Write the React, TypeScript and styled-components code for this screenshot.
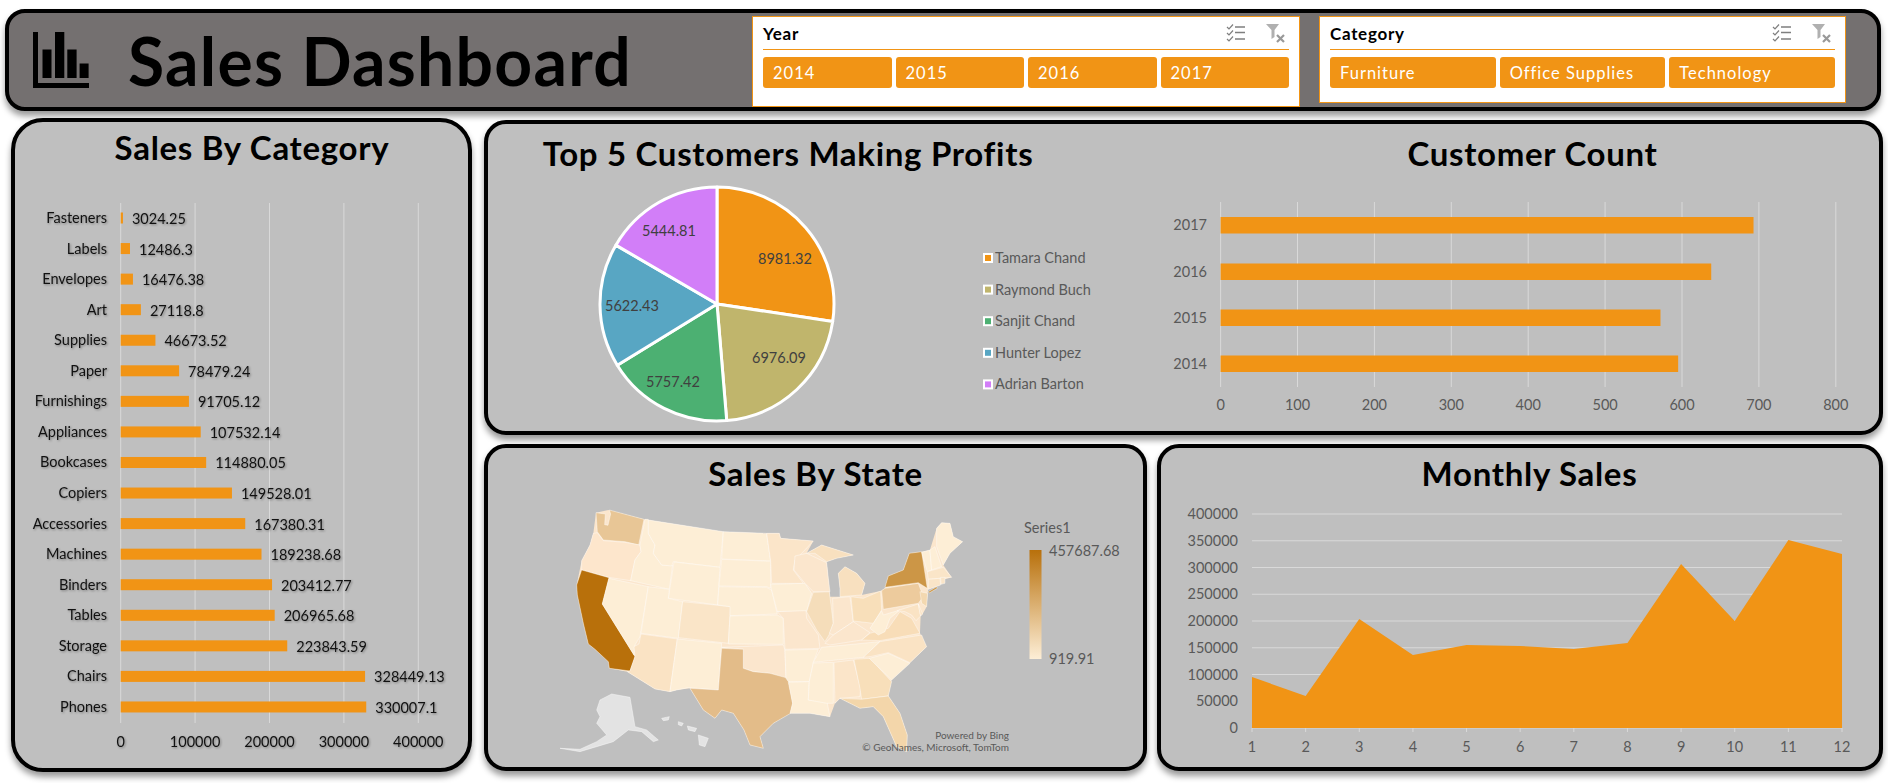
import React from 'react';
import styled, { createGlobalStyle } from 'styled-components';

const ORANGE = '#f19415';
const FONT = 'Lato, "Open Sans", sans-serif';

const categorySales: [string, number][] = [
  ['Fasteners', 3024.25],
  ['Labels', 12486.3],
  ['Envelopes', 16476.38],
  ['Art', 27118.8],
  ['Supplies', 46673.52],
  ['Paper', 78479.24],
  ['Furnishings', 91705.12],
  ['Appliances', 107532.14],
  ['Bookcases', 114880.05],
  ['Copiers', 149528.01],
  ['Accessories', 167380.31],
  ['Machines', 189238.68],
  ['Binders', 203412.77],
  ['Tables', 206965.68],
  ['Storage', 223843.59],
  ['Chairs', 328449.13],
  ['Phones', 330007.1],
];

const customers: { name: string; value: number; color: string; lx: number; ly: number }[] = [
  { name: 'Tamara Chand', value: 8981.32, color: '#f19415', lx: 785, ly: 259 },
  { name: 'Raymond Buch', value: 6976.09, color: '#c0b56c', lx: 779, ly: 358 },
  { name: 'Sanjit Chand', value: 5757.42, color: '#4cb072', lx: 673, ly: 382 },
  { name: 'Hunter Lopez', value: 5622.43, color: '#58a6c3', lx: 632, ly: 306 },
  { name: 'Adrian Barton', value: 5444.81, color: '#d27ef8', lx: 669, ly: 231 },
];

const customerCount: [string, number, number][] = [
  ['2017', 693, 225],
  ['2016', 638, 271.5],
  ['2015', 572, 317.5],
  ['2014', 595, 363.5],
];

const monthlyY = [678, 697, 620, 656, 646, 647, 650, 644, 565, 622, 541, 555];

const LIGHT = '#fdeed6';

// silhouette under the states, so small gaps between them stay filled
const mainland =
  '168,68 205,60 312,88 550,125 680,130 718,130 722,145 820,153 800,190 845,165 940,195 890,205 860,215 865,265 870,320 900,320 900,295 895,250 915,230 950,250 975,280 965,315 1022,303 1035,295 1045,258 1090,240 1108,190 1145,185 1170,180 1190,115 1205,98 1230,100 1240,140 1268,155 1230,190 1210,225 1235,262 1215,268 1200,285 1165,298 1163,310 1160,350 1148,372 1142,378 1140,430 1160,470 1110,518 1055,570 1045,618 1080,670 1102,735 1100,785 1070,770 1030,680 1000,650 960,655 900,625 885,640 870,680 810,670 750,670 700,700 660,740 670,775 630,765 612,720 580,670 545,660 525,685 490,660 450,595 410,600 390,605 345,597 262,545 208,535 205,515 165,478 145,462 130,400 112,315 110,285 125,212 150,165 160,130';

const westStates: [string, string][] = [
  ['#e8c696', '168,68 196,72 194,104 204,106 212,72 208,60 312,88 296,165 255,155 190,150 172,125'],
  ['#fde6cc', '160,130 172,128 190,152 255,157 300,165 303,185 285,210 272,272 205,262 125,240 125,212 150,165'],
  ['#b8700b', '125,240 207,263 187,342 285,500 270,543 208,535 205,515 165,478 145,462 130,400 112,315 110,285'],
  [LIGHT, '207,265 325,290 300,440 285,465 282,495 187,342'],
  [LIGHT, '315,88 325,88 325,130 345,165 340,190 365,225 398,225 388,298 272,272 285,210 303,185 300,165'],
  [LIGHT, '325,90 550,125 540,232 400,215 395,228 365,225 340,190 345,165 325,130'],
  [LIGHT, '402,216 540,232 533,345 385,325'],
  [LIGHT, '325,290 388,298 385,325 428,335 415,445 303,430'],
  ['#fae5c8', '428,335 572,350 565,460 415,443'],
  ['#fae3c4', '303,432 412,447 390,605 345,597 262,545 270,543 285,500 282,470 297,462'],
  [LIGHT, '412,447 545,460 535,600 445,593 410,600 390,605'],
  [LIGHT, '550,125 680,130 692,213 545,207'],
  [LIGHT, '545,208 692,214 692,295 680,290 537,288'],
  [LIGHT, '537,290 680,292 695,300 712,372 570,377 570,350 533,345'],
  [LIGHT, '570,378 712,375 730,385 730,463 565,462'],
  ['#fbe6cd', '545,472 730,465 735,480 738,565 690,550 640,545 610,535 610,478'],
  ['#e3bc89', '545,475 610,478 610,535 640,545 690,550 745,565 758,640 752,670 700,700 660,740 670,775 630,765 612,720 580,670 545,660 525,685 490,660 450,595 535,600'],
  ['#fbe5c9', '680,130 718,130 722,145 820,153 790,185 765,210 760,240 790,280 695,280 692,213'],
  [LIGHT, '692,283 795,280 815,310 800,365 712,365 695,300'],
  ['#fbe6cd', '712,365 798,362 800,385 835,435 840,475 735,478 730,385'],
  [LIGHT, '735,480 835,478 820,517 808,575 745,575 738,565'],
  [LIGHT, '745,577 808,575 805,630 860,630 870,680 810,670 750,670 758,640'],
];

const eastStates: [string, string][] = [
  ['#f5ddba', '70,307 118,305 130,400 120,430 105,455 80,420 50,365'],
  ['#fbe6cd', '15,198 50,190 110,218 115,265 120,305 70,305 45,280 12,240'],
  ['#f8e0bf', '50,190 95,165 190,195 140,205 110,215 75,190'],
  ['#f8e0bf', '145,250 165,230 200,250 225,280 215,315 150,320 150,295'],
  ['#fbe6cd', '128,325 180,320 190,395 130,435 118,430 130,400'],
  ['#f8dfba', '183,320 220,325 272,303 275,360 250,400 190,393'],
  ['#fbe6cd', '105,460 130,435 190,395 240,428 215,450 120,465'],
  [LIGHT, '95,472 270,455 220,502 70,517'],
  [LIGHT, '70,519 130,517 130,640 110,640 55,630 58,575'],
  ['#fbe5c9', '132,517 190,510 212,595 210,620 150,625 135,640'],
  ['#f8dfba', '192,508 240,505 305,575 295,618 215,628 210,595'],
  ['#f3d6aa', '150,625 215,628 295,618 330,670 352,735 350,785 320,770 280,680 250,650 210,655'],
  [LIGHT, '238,505 295,490 360,520 305,570'],
  ['#fae3c4', '220,502 270,455 395,435 410,470 360,518 295,488 240,500'],
  ['#f8ddb8', '240,430 295,415 330,365 365,385 390,430 270,452 215,450'],
  [LIGHT, '250,400 275,362 280,375 330,360 300,385 285,425 265,435 240,415'],
  ['#edcb9d', '275,302 285,295 385,280 400,320 385,340 280,358'],
  ['#cc9646', '285,292 295,258 340,240 358,190 395,185 412,295 385,278'],
  ['#f3d8b0', '390,305 413,310 410,350 395,340'],
  ['#fae3c4', '322,362 385,342 392,378 378,392 365,375 345,365'],
  ['#fae3c4', '385,342 398,372 392,378'],
  [LIGHT, '395,187 420,180 425,240 412,245'],
  [LIGHT, '420,180 435,170 455,230 425,240'],
  [LIGHT, '440,115 455,98 480,100 490,140 518,155 480,190 460,225 440,170'],
  ['#fae5c8', '412,245 460,232 485,262 415,268'],
  ['#fae5c8', '415,268 450,265 452,285 415,298'],
  ['#fae5c8', '452,262 465,262 465,280 453,283'],
  ['#cc9646', '415,305 440,290 442,295 418,309'],
];

const alaska = [
  '180,630 215,612 270,622 285,710 320,720 355,750 340,755 305,725 265,720 220,755 170,770 120,785 60,775 120,778 170,755 200,735 170,700 180,680 170,660',
  '475,735 505,745 495,770 478,765',
  '442,708 470,715 465,725 445,720',
  '415,695 430,700 425,708 415,704',
  '365,685 388,680 385,690 370,692',
];

const GlobalStyle = createGlobalStyle`
  html, body {
    margin: 0;
    background: #ffffff;
    font-family: ${FONT};
  }
`;

const Page = styled.div`
  width: 1888px;
  height: 783px;
  overflow: hidden;
  box-sizing: border-box;
  padding: 9px 5px 0 5px;
  display: flex;
  flex-direction: column;
  gap: 7px;
`;

const Header = styled.header`
  height: 102px;
  margin-right: 2px;
  box-sizing: border-box;
  border: 4px solid #000;
  border-radius: 20px;
  background: #747070;
  box-shadow: 0 5px 6px rgba(0, 0, 0, 0.4);
  display: flex;
  align-items: center;
  padding-left: 24px;
  padding-right: 31px;
`;

const Logo = styled.svg`
  width: 56px;
  height: 56px;
  flex: none;
`;

const DashboardTitle = styled.h1`
  margin: 2px 0 0 39px;
  font-size: 66px;
  font-weight: 700;
  line-height: 1;
  letter-spacing: 1.25px;
  color: #000;
  white-space: nowrap;
`;

const Slicers = styled.div`
  margin-left: auto;
  align-self: flex-start;
  margin-top: 3px;
  display: flex;
  align-items: flex-start;
  gap: 19px;
`;

const Slicer = styled.section<{ $width: number; $height: number }>`
  width: ${(p) => p.$width}px;
  height: ${(p) => p.$height}px;
  box-sizing: border-box;
  background: #fff;
  border: 1px solid ${ORANGE};
  padding: 0 10px;
`;

const SlicerHead = styled.div`
  height: 33px;
  box-sizing: border-box;
  border-bottom: 1px solid ${ORANGE};
  display: flex;
  align-items: center;
  justify-content: space-between;
  padding-right: 3px;
`;

const SlicerName = styled.span`
  font-size: 17px;
  font-weight: 700;
  letter-spacing: 0.7px;
  color: #000;
`;

const SlicerIcons = styled.div`
  display: flex;
  align-items: center;
  gap: 20px;
`;

const SlicerButtons = styled.div<{ $count: number }>`
  margin-top: 7px;
  display: grid;
  grid-template-columns: repeat(${(p) => p.$count}, 1fr);
  gap: 4px;
`;

const SlicerButton = styled.div`
  height: 31px;
  box-sizing: border-box;
  padding-left: 10px;
  border-radius: 3px;
  background: ${ORANGE};
  color: #fff;
  font-size: 16.5px;
  letter-spacing: 1px;
  line-height: 33px;
`;

const Body = styled.div`
  margin-left: 6px;
  display: grid;
  grid-template-columns: 461px 1fr;
  gap: 12px;
`;

const Panel = styled.section<{ $radius?: number; $height: number }>`
  height: ${(p) => p.$height}px;
  box-sizing: border-box;
  border: 4px solid #000;
  border-radius: ${(p) => p.$radius ?? 22}px;
  background: #bfbfbf;
  box-shadow: 0 5px 6px rgba(0, 0, 0, 0.4);
`;

const RightColumn = styled.div`
  margin-top: 2px;
  display: flex;
  flex-direction: column;
  gap: 9px;
`;

const BottomRow = styled.div`
  display: grid;
  grid-template-columns: 663px 726px;
  gap: 10px;
`;

const SplitPanel = styled(Panel)`
  display: grid;
  grid-template-columns: 652px 1fr;
`;

const ChartTitle = styled.h2<{ $left?: number; $right?: number; $top?: number }>`
  margin: 0;
  height: 48px;
  box-sizing: border-box;
  padding: ${(p) => p.$top ?? 3}px ${(p) => p.$right ?? 0}px 0 ${(p) => p.$left ?? 0}px;
  font-size: 33px;
  font-weight: 700;
  line-height: 44px;
  letter-spacing: 0.7px;
  text-align: center;
  color: #000;
  white-space: nowrap;
`;

const ChartSvg = styled.svg`
  display: block;
  font-family: ${FONT};
`;

const DarkText = styled.text`
  font-size: 14.5px;
  fill: #111;
  filter: drop-shadow(1px 1px 1px rgba(0, 0, 0, 0.35));
`;

const AxisText = styled.text`
  font-size: 14.5px;
  fill: #595959;
`;

const PieText = styled.text`
  font-size: 14.5px;
  fill: #404040;
`;

const SmallText = styled.text`
  font-size: 10px;
  fill: #595959;
`;

const GridLine = styled.line`
  stroke: #d9d9d9;
  stroke-width: 1;
`;

const State = styled.polygon`
  stroke: #ffffff;
  stroke-width: 2;
  stroke-opacity: 0.6;
  stroke-linejoin: round;
`;

const ChecklistIcon = () => (
  <svg width="20" height="18" viewBox="0 0 20 18" fill="none" stroke="#7f7f7f" strokeWidth="1.2">
    <path d="M1 3l2 2 4-4.500M1 9l2 2 4-4.500M1 15l2 2 4-4.500" />
    <path d="M9 3h10M9 8.500h10M9 15h10" strokeWidth="1.4" />
  </svg>
);

const ClearFilterIcon = () => (
  <svg width="20" height="19" viewBox="0 0 20 19">
    <path d="M0 0h13L8.500 6v7l-3 2V6z" fill="#b0b0b0" />
    <path d="M11 11l7 7M18 11l-7 7" stroke="#999999" strokeWidth="2.2" fill="none" />
  </svg>
);

const FilterBox = ({ name, items, width, height }: { name: string; items: string[]; width: number; height: number }) => (
  <Slicer $width={width} $height={height}>
    <SlicerHead>
      <SlicerName>{name}</SlicerName>
      <SlicerIcons>
        <ChecklistIcon />
        <ClearFilterIcon />
      </SlicerIcons>
    </SlicerHead>
    <SlicerButtons $count={items.length}>
      {items.map((item) => (
        <SlicerButton key={item}>{item}</SlicerButton>
      ))}
    </SlicerButtons>
  </Slicer>
);

const CategoryChart = () => {
  const x0 = 120.7;
  const scale = 74.4 / 100000;
  return (
    <ChartSvg width={453} height={598} viewBox="15 170 453 598">
      {[0, 1, 2, 3, 4].map((t) => (
        <g key={t}>
          <GridLine x1={x0 + t * 74.4} x2={x0 + t * 74.4} y1={203} y2={723} />
          <DarkText x={x0 + t * 74.4} y={747} textAnchor="middle">
            {t * 100000}
          </DarkText>
        </g>
      ))}
      {categorySales.map(([name, value], i) => {
        const y = 218 + i * 30.56;
        const w = value * scale;
        return (
          <g key={name}>
            <DarkText x={107} y={y + 5} textAnchor="end">
              {name}
            </DarkText>
            <rect x={x0} y={y - 5.5} width={w} height={11} fill={ORANGE} />
            <DarkText x={x0 + w + 9} y={y + 6}>
              {value}
            </DarkText>
          </g>
        );
      })}
    </ChartSvg>
  );
};

const PieChart = () => {
  const cx = 717;
  const cy = 304;
  const r = 117;
  const total = customers.reduce((sum, c) => sum + c.value, 0);
  let angle = 0;
  const point = (a: number) => `${cx + r * Math.sin(a)} ${cy - r * Math.cos(a)}`;
  return (
    <ChartSvg width={652} height={259} viewBox="488 172 652 259">
      {customers.map((c) => {
        const start = angle;
        angle += (c.value / total) * Math.PI * 2;
        const large = angle - start > Math.PI ? 1 : 0;
        return (
          <path
            key={c.name}
            d={`M${cx} ${cy}L${point(start)}A${r} ${r} 0 ${large} 1 ${point(angle)}Z`}
            fill={c.color}
            stroke="#fff"
            strokeWidth={3}
            strokeLinejoin="round"
          />
        );
      })}
      {customers.map((c) => (
        <PieText key={c.name} x={c.lx} y={c.ly + 5} textAnchor="middle">
          {c.value}
        </PieText>
      ))}
      {customers.map((c, i) => {
        const y = 258 + i * 31.6;
        return (
          <g key={c.name}>
            <rect x={983} y={y - 5} width={10} height={10} fill="#fff" />
            <rect x={985} y={y - 3} width={6} height={6} fill={c.color} />
            <AxisText x={995} y={y + 5}>
              {c.name}
            </AxisText>
          </g>
        );
      })}
    </ChartSvg>
  );
};

const CustomerChart = () => {
  const x0 = 1220.6;
  const scale = 0.769;
  return (
    <ChartSvg width={738} height={259} viewBox="1140 172 738 259">
      {[0, 100, 200, 300, 400, 500, 600, 700, 800].map((t) => (
        <g key={t}>
          <GridLine x1={x0 + t * scale} x2={x0 + t * scale} y1={202} y2={387} />
          <AxisText x={x0 + t * scale} y={410} textAnchor="middle">
            {t}
          </AxisText>
        </g>
      ))}
      {customerCount.map(([year, value, y]) => (
        <g key={year}>
          <AxisText x={1207} y={y + 5} textAnchor="end">
            {year}
          </AxisText>
          <rect x={x0} y={y - 8} width={value * scale} height={16.5} fill={ORANGE} />
        </g>
      ))}
    </ChartSvg>
  );
};

const StateMap = () => (
  <ChartSvg width={655} height={270} viewBox="488 496 655 270">
    <defs>
      <linearGradient id="scale" x1="0" x2="0" y1="0" y2="1">
        <stop offset="0" stopColor="#b8700b" />
        <stop offset="1" stopColor="#fdeed6" />
      </linearGradient>
    </defs>
    <g transform="translate(540 490) scale(0.3333)">
      {alaska.map((pts) => (
        <State key={pts} points={pts} fill="#e3e3e3" />
      ))}
      <polygon points={mainland} fill="#fbe6cd" />
      {westStates.map(([fill, pts]) => (
        <State key={pts} points={pts} fill={fill} />
      ))}
      <g transform="translate(750 0)">
        {eastStates.map(([fill, pts]) => (
          <State key={pts} points={pts} fill={fill} />
        ))}
      </g>
    </g>
    <AxisText x={1024} y={533}>
      Series1
    </AxisText>
    <rect x={1029.5} y={550} width={12} height={109} fill="url(#scale)" />
    <AxisText x={1049} y={556}>
      457687.68
    </AxisText>
    <AxisText x={1049} y={664}>
      919.91
    </AxisText>
    <SmallText x={1009} y={739} textAnchor="end">
      Powered by Bing
    </SmallText>
    <SmallText x={1009} y={751} textAnchor="end">
      © GeoNames, Microsoft, TomTom
    </SmallText>
  </ChartSvg>
);

const MonthlyChart = () => {
  const step = 590 / 11;
  const xs = monthlyY.map((_, i) => 1252 + i * step);
  const area = `1252,729 ${monthlyY.map((y, i) => `${xs[i]},${y}`).join(' ')} 1842,729`;
  return (
    <ChartSvg width={718} height={270} viewBox="1161 497 718 270">
      {[0, 1, 2, 3, 4, 5, 6, 7, 8].map((t) => (
        <g key={t}>
          <GridLine x1={1252} x2={1842} y1={729 - t * 26.75} y2={729 - t * 26.75} />
          <AxisText x={1238} y={734 - t * 26.75} textAnchor="end">
            {t * 50000}
          </AxisText>
        </g>
      ))}
      <polygon points={area} fill={ORANGE} />
      {xs.map((x, i) => (
        <g key={x}>
          <GridLine x1={x} x2={x} y1={729} y2={733} />
          <AxisText x={x} y={753} textAnchor="middle">
            {i + 1}
          </AxisText>
        </g>
      ))}
    </ChartSvg>
  );
};

export default function App() {
  return (
    <Page>
      <GlobalStyle />
      <Header>
        <Logo viewBox="0 0 56 56">
          <path d="M0 0h5v51h51v5H0z M9.500 17.500h9v28.500h-9z M22 0h9.300v46H22z M34.300 17.500h9.300V46h-9.300z M46.600 31.500h9V46h-9z" fill="#000" />
        </Logo>
        <DashboardTitle>Sales Dashboard</DashboardTitle>
        <Slicers>
          <FilterBox name="Year" items={['2014', '2015', '2016', '2017']} width={548} height={91} />
          <FilterBox name="Category" items={['Furniture', 'Office Supplies', 'Technology']} width={527} height={87} />
        </Slicers>
      </Header>
      <Body>
        <Panel $radius={32} $height={654}>
          <ChartTitle $left={21}>Sales By Category</ChartTitle>
          <CategoryChart />
        </Panel>
        <RightColumn>
          <SplitPanel $height={315}>
            <div>
              <ChartTitle $right={52} $top={7}>Top 5 Customers Making Profits</ChartTitle>
              <PieChart />
            </div>
            <div>
              <ChartTitle $left={46} $top={7}>Customer Count</ChartTitle>
              <CustomerChart />
            </div>
          </SplitPanel>
          <BottomRow>
            <Panel $height={327}>
              <ChartTitle>Sales By State</ChartTitle>
              <StateMap />
            </Panel>
            <Panel $height={327}>
              <ChartTitle $left={19}>Monthly Sales</ChartTitle>
              <MonthlyChart />
            </Panel>
          </BottomRow>
        </RightColumn>
      </Body>
    </Page>
  );
}
